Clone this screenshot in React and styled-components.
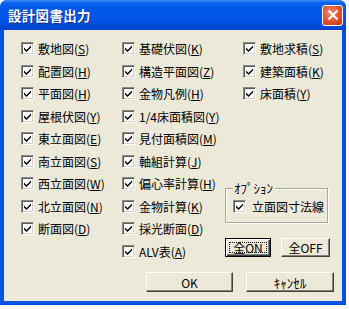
import React from "react";
import styled, { createGlobalStyle } from "styled-components";

const Global = createGlobalStyle`
  html, body { margin: 0; padding: 0; background: #fff; }
  body { font-family: "Noto Sans CJK JP", "Liberation Sans", sans-serif; }
`;

const Window = styled.div`
  width: 346px;
  height: 305px;
  box-sizing: border-box;
  display: flex;
  flex-direction: column;
  background: #0054e3;
  border-radius: 7px 7px 0 0;
  overflow: hidden;
`;

const TitleBar = styled.div`
  height: 30px;
  flex: none;
  display: flex;
  align-items: center;
  justify-content: space-between;
  padding: 0 3px 0 8px;
  background: linear-gradient(
    to bottom,
    #3d8cf5 0px,
    #0a61ef 3px,
    #0058e6 8px,
    #0055e2 20px,
    #0048d5 27px,
    #0040c8 30px
  );
`;

const Title = styled.span`
  color: #fff;
  font-size: 13.5px;
  font-weight: bold;
  letter-spacing: 0.3px;
  text-shadow: 1px 1px 0 #0a2a90;
`;

const CloseButton = styled.div`
  width: 21px;
  height: 21px;
  box-sizing: border-box;
  border: 1px solid #fff;
  border-radius: 3px;
  background: radial-gradient(circle at 40% 35%, #f08a6a 0%, #e0502a 55%, #c23a12 100%);
  display: flex;
  align-items: center;
  justify-content: center;
`;

const Body = styled.div`
  flex: 1;
  margin: 0 4px 4px 4px;
  background: #ece9d8;
  padding: 12px 0 0 17px;
  display: flex;
  flex-direction: column;
  font-size: 12px;
  color: #000;
`;

const Columns = styled.div`
  display: grid;
  grid-template-columns: 101px 121px 1fr;
`;

const Column = styled.div`
  display: flex;
  flex-direction: column;
`;

const Row = styled.label`
  height: 22.5px;
  display: flex;
  align-items: flex-start;
  gap: 4px;
  white-space: nowrap;
  line-height: 13px;
`;

const Box = styled.span`
  width: 13px;
  height: 13px;
  flex: none;
  box-sizing: border-box;
  background: #fff;
  border-top: 1px solid #8a8a8a;
  border-left: 1px solid #8a8a8a;
  border-right: 1px solid #fff;
  border-bottom: 1px solid #fff;
  box-shadow: inset 1px 1px 0 #5a5a5a, inset -1px -1px 0 #d4d0c8;
  display: flex;
  align-items: center;
  justify-content: center;
`;

const Key = styled.span`
  text-decoration: underline;
  text-underline-offset: 1px;
`;

const Kana = styled.span`
  font-size: 13px;
`;

const SideColumn = styled.div`
  display: flex;
  flex-direction: column;
`;

const Group = styled.div`
  margin: 78px 0 0 -18px;
  width: 103px;
  height: 35px;
  box-sizing: border-box;
  border: 1px solid #aca899;
  box-shadow: 1px 1px 0 #fff, inset 1px 1px 0 #fff;
  display: flex;
  flex-direction: column;
  align-items: flex-start;
  padding-left: 7px;
`;

const Legend = styled.span`
  margin: -8px 0 0 0;
  padding: 0 2px 0 1px;
  background: #ece9d8;
  line-height: 14px;
  font-size: 13px;
`;

const GroupRow = styled.label`
  display: flex;
  align-items: center;
  gap: 6px;
  margin-top: 5px;
  white-space: nowrap;
  line-height: 13px;
`;

const SmallButtons = styled.div`
  display: flex;
  gap: 10px;
  margin: 15px 0 0 -18px;
`;

const Button = styled.button`
  width: ${(p) => p.$w}px;
  height: ${(p) => p.$h || 19}px;
  box-sizing: border-box;
  padding: 0;
  font-family: inherit;
  font-size: 12px;
  color: #000;
  background: #ece9d8;
  border: 1px solid;
  border-color: #fff #404040 #404040 #fff;
  box-shadow: inset -1px -1px 0 #808080;
  position: relative;
  ${(p) =>
    p.$focus &&
    `
    border: 1px solid #000;
    box-shadow: inset 1px 1px 0 #fff, inset -1px -1px 0 #404040, inset -2px -2px 0 #808080;
    &::after {
      content: "";
      position: absolute;
      inset: 3px;
      border: 1px dotted #000;
    }
  `}
`;

const Footer = styled.div`
  display: flex;
  justify-content: flex-end;
  gap: 13px;
  padding-right: 8px;
  margin-top: auto;
  margin-bottom: 9px;
`;

const Check = () => (
  <Box>
    <svg width="9" height="9" viewBox="0 0 9 9">
      <path d="M1 3.5 L3.5 6 L8 1.5 L8 3.5 L3.5 8 L1 5.5 Z" fill="#000" />
    </svg>
  </Box>
);

const Item = ({ label, k }) => (
  <Row>
    <Check />
    <span>
      {label}(<Key>{k}</Key>)
    </span>
  </Row>
);

const col1 = [
  ["敷地図", "S"],
  ["配置図", "H"],
  ["平面図", "H"],
  ["屋根伏図", "Y"],
  ["東立面図", "E"],
  ["南立面図", "S"],
  ["西立面図", "W"],
  ["北立面図", "N"],
  ["断面図", "D"],
];

const col2 = [
  ["基礎伏図", "K"],
  ["構造平面図", "Z"],
  ["金物凡例", "H"],
  ["1/4床面積図", "Y"],
  ["見付面積図", "M"],
  ["軸組計算", "J"],
  ["偏心率計算", "H"],
  ["金物計算", "K"],
  ["採光断面", "D"],
  ["ALV表", "A"],
];

const col3 = [
  ["敷地求積", "S"],
  ["建築面積", "K"],
  ["床面積", "Y"],
];

export default function App() {
  return (
    <>
      <Global />
      <Window>
        <TitleBar>
          <Title>設計図書出力</Title>
          <CloseButton>
            <svg width="12" height="12" viewBox="0 0 12 12">
              <path d="M1.5 1.5 L10.5 10.5 M10.5 1.5 L1.5 10.5" stroke="#fff" strokeWidth="2.2" />
            </svg>
          </CloseButton>
        </TitleBar>
        <Body>
          <Columns>
            <Column>
              {col1.map(([l, k]) => (
                <Item key={l} label={l} k={k} />
              ))}
            </Column>
            <Column>
              {col2.map(([l, k]) => (
                <Item key={l} label={l} k={k} />
              ))}
            </Column>
            <SideColumn>
              {col3.map(([l, k]) => (
                <Item key={l} label={l} k={k} />
              ))}
              <Group>
                <Legend>ｵﾌﾟｼｮﾝ</Legend>
                <GroupRow>
                  <Check />
                  立面図寸法線
                </GroupRow>
              </Group>
              <SmallButtons>
                <Button $w={46} $focus>
                  全ON
                </Button>
                <Button $w={49}>全OFF</Button>
              </SmallButtons>
            </SideColumn>
          </Columns>
          <Footer>
            <Button $w={87} $h={20}>
              OK
            </Button>
            <Button $w={88} $h={20}>
              <Kana>ｷｬﾝｾﾙ</Kana>
            </Button>
          </Footer>
        </Body>
      </Window>
    </>
  );
}
